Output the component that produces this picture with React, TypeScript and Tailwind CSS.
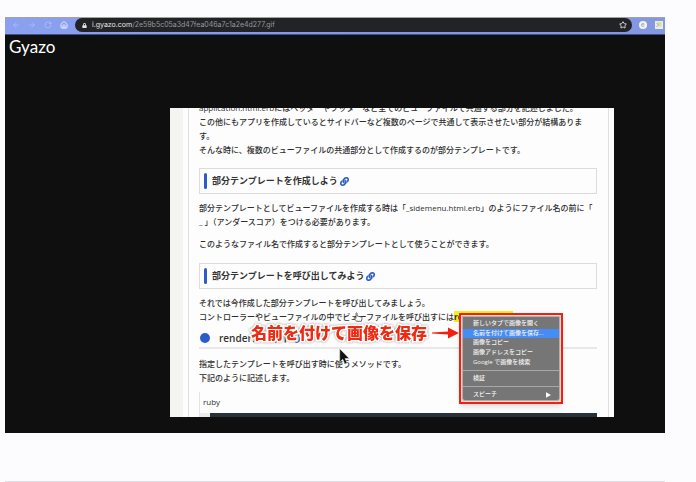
import React from "react";
import { ArrowLeft, ArrowRight, House, RotateCw, Star } from "lucide-react";
import { FaLink, FaLock } from "react-icons/fa";

const uiFont = "font-['Inter','Noto_Sans_CJK_JP',sans-serif]";
const bodyFont = "font-['Open_Sans','Noto_Sans_CJK_JP',sans-serif]";

function NavButton({ label, dim, children }: { label: string; dim?: boolean; children: React.ReactNode }) {
  return (
    <button
      type="button"
      aria-label={label}
      className={dim ? "flex w-2 justify-center text-[#b4c3fa]" : "flex w-2 justify-center text-[#e4eaff]"}
    >
      {children}
    </button>
  );
}

function BrowserBar() {
  return (
    <header
      className={`${uiFont} flex h-[18px] items-start border-t border-b border-t-[#a3a3a0] border-b-[#3f4f8f] bg-linear-to-r from-[#8ba1f0] via-[#8298e8] to-[#8498e0]`}
    >
      <nav aria-label="Browser" className="flex h-[14px] w-[70px] shrink-0 items-center gap-2 pl-[7px]">
        <NavButton label="Back" dim><ArrowLeft size={8} /></NavButton>
        <NavButton label="Forward" dim><ArrowRight size={8} /></NavButton>
        <NavButton label="Reload" dim><RotateCw size={8} /></NavButton>
        <NavButton label="Home"><House size={8} strokeWidth={3} /></NavButton>
      </nav>
      <div className="flex h-[14px] min-w-0 flex-1 items-center rounded-full bg-[#222327] pr-[5px] pl-[7px] text-[7px] leading-[14px]">
        <FaLock size={5} className="mr-[5px] shrink-0 text-[#e4e4e4]" />
        <label htmlFor="address" className="text-[#e6e6e6]">i.gyazo.com</label>
        <input
          id="address"
          type="text"
          defaultValue="/2e59b5c05a3d47fea046a7c1a2e4d277.gif"
          className="min-w-0 flex-1 bg-transparent p-0 text-[#96979a] outline-none"
        />
        <button type="button" aria-label="Bookmark" className="text-[#d8d8d8]">
          <Star size={8} strokeWidth={3} />
        </button>
      </div>
      <div className="flex h-[14px] shrink-0 items-center gap-2 pr-[2px] pl-[7px]">
        <button type="button" aria-label="Extension" className="flex size-2 items-center justify-center">
          <svg viewBox="0 0 16 16" className="size-2">
            <circle cx="8" cy="8" r="8" fill="#f3f3f3" />
            <path d="M10.5 5.5a3.4 3.4 0 1 0 0 5M6 7.5h5" fill="none" stroke="#a4a4a4" strokeWidth="1.6" />
          </svg>
        </button>
        <button type="button" aria-label="Capture" className="flex size-2 items-center justify-center">
          <svg viewBox="0 0 16 16" className="size-2">
            <rect width="16" height="16" fill="#e9ecec" />
            <path d="M4 2h9v9H8z" fill="#dfe08b" />
            <path d="M3 4l4 4-4 4" fill="none" stroke="#8c99a8" strokeWidth="1.6" />
          </svg>
        </button>
      </div>
    </header>
  );
}

function SectionHeading({ children }: { children: React.ReactNode }) {
  return (
    <h2 className="flex h-[26px] items-center border border-[#dcdcdc] px-1 text-[9px] leading-[14px] font-bold text-[#333]">
      <span className="mr-[5px] h-4 w-[3px] rounded-sm bg-[#2c5cc5]" />
      {children}
      <a href="#section" aria-label="Link to section" className="ml-0.5 text-[#2c5cc5]">
        <FaLink size={9} stroke="currentColor" strokeWidth={24} />
      </a>
    </h2>
  );
}

function MenuItem({ children, active }: { children: React.ReactNode; active?: boolean }) {
  return (
    <button
      type="button"
      role="menuitem"
      className={
        active
          ? "flex min-h-[9px] w-full flex-1 items-center justify-between bg-[#468cf7] pr-2 pl-[10px] text-left"
          : "flex min-h-[9px] w-full flex-1 items-center justify-between pr-2 pl-[10px] text-left"
      }
    >
      {children}
    </button>
  );
}

function ContextMenu() {
  return (
    <div className="absolute top-[205px] right-[51px] w-[104px] border-2 border-[#f2200f] bg-[#f5d5d0] p-px shadow-md">
      <div
        role="menu"
        className="rounded-b-[3px] border border-[#b0b0b0] bg-[#767676] pt-[2px] pb-px text-[6px] leading-[9px] font-medium whitespace-nowrap text-[#f4f4f4]"
      >
        <div className="flex h-12 flex-col">
          <MenuItem>新しいタブで画像を開く</MenuItem>
          <MenuItem active>名前を付けて画像を保存...</MenuItem>
          <MenuItem>画像をコピー</MenuItem>
          <MenuItem>画像アドレスをコピー</MenuItem>
          <MenuItem>Google で画像を検索</MenuItem>
        </div>
        <hr className="my-[3px] border-[#a8a8a8]" />
        <MenuItem>検証</MenuItem>
        <hr className="my-[3px] border-[#a8a8a8]" />
        <MenuItem>
          スピーチ
          <svg viewBox="0 0 5 6" className="h-1.5 w-[5px]">
            <path d="M0 0.3L5 3L0 5.7z" fill="#fff" />
          </svg>
        </MenuItem>
      </div>
    </div>
  );
}

function Annotation() {
  return (
    <div className="absolute top-[213px] right-[155px] flex items-center gap-[5px]">
      <p className="text-[16px] leading-6 font-black whitespace-nowrap text-[#ee2a12] [paint-order:stroke_fill] [-webkit-text-stroke:3px_#fff] [filter:drop-shadow(0_0_1px_#999)]">
        名前を付けて画像を保存
      </p>
      <svg viewBox="0 0 27 12" className="h-3 w-[27px]">
        <path d="M0 5.4L16 4.6V0.6L27 6L16 11.4V7.4L0 6.6z" fill="#f2200f" />
      </svg>
    </div>
  );
}

function Article() {
  return (
    <div
      className={`${bodyFont} relative mr-[51px] ml-[25%] flex h-[309px] overflow-hidden bg-[#fdfdfd] text-[8px] leading-[14px] font-medium text-[#2e2e2e]`}
    >
      <div className="w-[13px] shrink-0 bg-[#f4f4f2]" />
      <article className="mr-[5px] ml-[5px] min-w-0 flex-1 border-x border-[#e0e0e0] pr-[11px] pl-[10px]">
        <p className="-mt-[7px]">
          application.html.erbにはヘッダーやフッターなど全てのビューファイルで共通する部分を記述しました。
          <br />
          この他にもアプリを作成しているとサイドバーなど複数のページで共通して表示させたい部分が結構ありま
          <br />
          す。
          <br />
          そんな時に、複数のビューファイルの共通部分として作成するのが部分テンプレートです。
        </p>
        <div className="mt-[11px]">
          <SectionHeading>部分テンプレートを作成しよう</SectionHeading>
        </div>
        <p className="mt-[7px]">
          部分テンプレートとしてビューファイルを作成する時は「_sidemenu.html.erb」のようにファイル名の前に「
          <br />
          _ 」（アンダースコア）をつける必要があります。
        </p>
        <p className="mt-2">このようなファイル名で作成すると部分テンプレートとして使うことができます。</p>
        <div className="mt-3">
          <SectionHeading>部分テンプレートを呼び出してみよう</SectionHeading>
        </div>
        <p className="mt-[7px] whitespace-nowrap">
          それでは今作成した部分テンプレートを呼び出してみましょう。
          <br />
          コントローラーやビューファイルの中でビューファイルを呼び出すには
          <mark className="bg-[#f3ee1c] font-bold text-[#2e2e2e]">renderメソッド</mark>
          を使います。
        </p>
        <h3 className="mt-[5px] flex h-5 items-center border-b-2 border-[#e8e8e8] pl-px text-[10px] leading-4 font-semibold text-[#333]">
          <span className="mr-[9px] size-[10px] rounded-full bg-[#2c5cc5]" />
          renderメソッド
          <a href="#render" aria-label="Link to render" className="ml-0.5 text-[#2c5cc5]">
            <FaLink size={9} />
          </a>
        </h3>
        <p className="mt-2">
          指定したテンプレートを呼び出す時に使うメソッドです。
          <br />
          下記のように記述します。
        </p>
        <figure className="mt-[7px] border-l border-[#e4e4e4]">
          <figcaption className="h-[21px] pl-[3px] leading-5">ruby</figcaption>
          <div className="flex h-8 bg-[#263238]">
            <span className="w-[10px] bg-[#ececec]" />
          </div>
        </figure>
      </article>
      <svg viewBox="0 0 10 10" className="absolute top-[204px] left-[183px] size-[10px]">
        <path
          d="M3.5 9.3L1 6.2Q.8 5.2 2 5.6L3 6.4V1.2Q3.5.5 4.1 1.2V4L8.5 5Q9.2 5.3 9 6.3L8.3 9.3z"
          fill="#fff"
          stroke="#444"
          strokeWidth=".8"
        />
      </svg>
      <Annotation />
      <svg viewBox="0 0 11 17" className="absolute top-[240px] left-[169px] h-[17px] w-[11px]">
        <path d="M.7.7V14.2L3.8 11.3L5.8 16L8.1 15L6.1 10.5H10.2z" fill="#111" stroke="#ddd" strokeWidth=".6" />
      </svg>
      <ContextMenu />
    </div>
  );
}

export default function App() {
  return (
    <main className="min-h-screen bg-[#fcfcff] pt-[17px] pr-[31px] pl-[5px]">
      <section className="bg-[#0f0f0f] pb-4">
        <BrowserBar />
        <a
          href="#gyazo"
          className="ml-1 block h-[73px] w-fit font-['Lato',sans-serif] text-[17px] leading-6 text-white"
        >
          Gyazo
        </a>
        <Article />
      </section>
      <hr className="mt-12 border-[#dedee4]" />
    </main>
  );
}
